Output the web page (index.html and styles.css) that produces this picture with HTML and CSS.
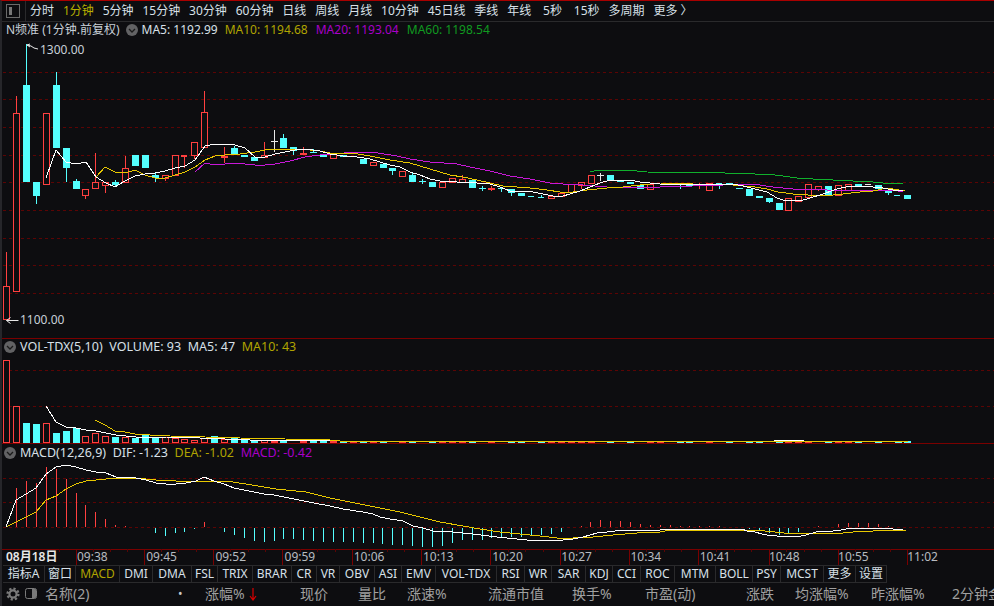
FILE: index.html
```html
<!DOCTYPE html>
<html lang="zh">
<head>
<meta charset="utf-8">
<title>N频准</title>
<link rel="stylesheet" href="styles.css">
</head>
<body>
<div class="app">
  <nav class="toolbar">
    <span class="layout-btn"><i></i></span>
    <span class="sep"></span>
    <div class="periods">
      <span>分时</span><span class="on">1分钟</span><span>5分钟</span><span>15分钟</span><span>30分钟</span><span>60分钟</span><span>日线</span><span>周线</span><span>月线</span><span>10分钟</span><span>45日线</span><span>季线</span><span>年线</span><span class="wide">5秒</span><span class="wide">15秒</span><span>多周期</span><span>更多 〉</span>
    </div>
  </nav>

  <section class="panel main-panel">
    <div class="legend first">
      <span class="title">N频准 (1分钟.前复权)</span>
      <span class="chev"><svg viewBox="0 0 12 12" width="12" height="12"><path d="M3 5l3 3 3-3" class="chev-line"/></svg></span>
      <span class="w">MA5: 1192.99</span><span class="y">MA10: 1194.68</span><span class="m">MA20: 1193.04</span><span class="g">MA60: 1198.54</span>
    </div>
    <svg class="chart" viewBox="0 22 994 316" width="994" height="316">
      <path class="grid" d="M3 72.5H994M3 99.5H994M3 127.5H994M3 155.5H994M3 182.5H994M3 210.5H994M3 238.5H994M3 265.5H994M3 293.5H994"/>
      <path class="wick-r" d="M6.5 252V287M16.5 96V113M85.5 195V199M95.5 153V182M105.5 185V193M125.5 156V168M165.5 178V181M184.5 155V168M194.5 155V159M204.5 91V112M224.5 147V163M264.5 142V155M303.5 147V154M462.5 175V179M491.5 186V191M551.5 196V199M581.5 185V189M699.5 183V189M818.5 189V191"/>
      <path class="wick-c" d="M26.5 44V85M36.5 196V204M56.5 72V85M66.5 168V182M76.5 179V181M115.5 180V187M155.5 173V182M234.5 146V148M283.5 134V138M293.5 151V155M313.5 149V152M392.5 171V175M412.5 173V175M422.5 179V184M482.5 186V191M501.5 188V192M511.5 193V196M541.5 195V198M680.5 185V189M689.5 186V187M719.5 185V189M769.5 202V203M888.5 193V195"/>
      <path class="wick-w" d="M274.5 130V152M600.5 173V181"/>
      <path class="fill-c" d="M23 85h7v97h-7zM33 182h7v14h-7zM53 85h7v63h-7zM63 148h7v20h-7zM73 181h7v8h-7zM112 182h7v3h-7zM132 155h7v11h-7zM142 155h7v13h-7zM152 175h7v3h-7zM231 148h7v7h-7zM241 155h7v2h-7zM251 157h7v4h-7zM280 138h7v10h-7zM290 147h7v4h-7zM310 152h7v1h-7zM320 154h7v3h-7zM340 155h7v2h-7zM360 159h7v5h-7zM380 164h7v4h-7zM389 168h7v3h-7zM409 175h7v7h-7zM419 181h7v1h-7zM429 182h7v5h-7zM469 180h7v8h-7zM479 188h7v1h-7zM498 188h7v1h-7zM508 189h7v4h-7zM518 193h7v3h-7zM528 196h6v1h-6zM538 197h6v1h-6zM607 175h7v6h-7zM617 181h7v1h-7zM627 182h7v2h-7zM637 185h7v4h-7zM677 183h7v2h-7zM686 184h7v2h-7zM716 183h6v2h-6zM726 183h7v2h-7zM736 188h7v1h-7zM746 189h7v7h-7zM756 196h7v2h-7zM766 198h7v4h-7zM776 203h7v7h-7zM825 186h7v9h-7zM855 184h7v3h-7zM875 185h7v4h-7zM885 190h7v3h-7zM894 195h6v1h-6zM904 195h7v4h-7z"/>
      <path class="fill-r" d="M488 188h7v2h-7zM696 185h7v1h-7z"/>
      <path class="fill-w" d="M271 141h7v1h-7zM597 175h7v1h-7zM865 184h6v1h-6z"/>
      <path class="hollow" d="M3.5 286.5h6v33h-6zM13.5 113.5h6v178h-6zM43.5 113.5h6v71h-6zM82.5 189.5h6v6h-6zM92.5 182.5h6v6h-6zM102.5 182.5h6v3h-6zM122.5 168.5h6v14h-6zM162.5 175.5h6v3h-6zM172.5 155.5h6v20h-6zM181.5 155.5h5v1h-5zM191.5 142.5h6v13h-6zM201.5 112.5h6v35h-6zM221.5 156.5h6v1h-6zM261.5 155.5h6v2h-6zM300.5 153.5h6v1h-6zM330.5 154.5h6v4h-6zM370.5 162.5h6v3h-6zM399.5 171.5h6v5h-6zM439.5 182.5h6v5h-6zM449.5 178.5h6v4h-6zM459.5 179.5h6v3h-6zM548.5 196.5h6v2h-6zM558.5 193.5h6v3h-6zM568.5 184.5h6v8h-6zM578.5 182.5h6v3h-6zM588.5 175.5h6v8h-6zM647.5 184.5h6v5h-6zM706.5 183.5h6v7h-6zM785.5 198.5h6v12h-6zM795.5 196.5h6v5h-6zM805.5 184.5h6v13h-6zM815.5 186.5h6v3h-6zM835.5 185.5h6v10h-6zM845.5 184.5h6v6h-6z"/>
      <polyline class="ln green" points="590,172 598,170 607,170 637,171 647,172 725,173 755,174 775,175 790,177 797,178 813,179 833,180 853,181 873,182 883,183 903,184"/>
      <polyline class="ln magenta" points="195,172 205,163 215,165 225,164 235,163 245,164 255,165 265,165 275,164 290,161 305,157 320,155 330,154 358,152 378,153 397,156 410,159 430,162 457,164 470,167 490,171 510,176 530,179 550,183 563,184 583,185 607,187 630,187 660,187 693,186 753,184 773,187 793,189 827,190 893,190 903,192"/>
      <polyline class="ln yellow" points="96,177 105,167 115,172 125,173 135,170 145,175 155,178 165,178 175,175 185,172 195,167 205,160 215,156 225,155 240,154 255,152 265,150 285,149 300,149 320,151 330,153 358,154 370,156 390,160 410,163 430,169 450,175 463,177 477,180 490,183 503,186 517,187 530,188 547,190 560,192 573,192 587,190 607,188 623,187 640,185 660,183 693,184 733,185 755,187 767,189 778,192 793,194 823,196 843,194 860,192 873,191 887,188 905,191"/>
      <polyline class="ln white" points="46,178 56,150 66,162 76,164 86,162 96,177 106,183 115,187 125,181 135,176 145,174 155,173 165,171 175,168 185,166 195,160 205,146 215,144 235,145 245,148 255,157 265,157 275,154 295,150 305,149 320,151 330,154 343,156 357,157 370,159 380,162 390,165 400,167 410,172 420,175 430,179 440,181 457,182 467,182 477,183 490,184 500,187 510,191 520,191 533,192 543,194 553,196 563,196 570,194 580,191 590,187 600,183 610,180 630,180 640,182 650,183 660,184 677,185 693,184 733,184 743,186 755,189 767,192 777,198 783,200 800,201 810,198 823,194 837,189 850,186 873,187 883,188 893,190 903,191"/>
      <path class="flag" d="M27 45l3-1M27 45l3 2M27 45l4 1 3 2 4 1M6.500 320.500l4-3M6.500 320.500l4 3M6.500 320.500h12"/>
      <text class="price" x="40" y="54">1300.00</text>
      <text class="price" x="20" y="324">1100.00</text>
    </svg>
  </section>

  <section class="panel vol-panel">
    <div class="legend lower">
      <span class="chev"><svg viewBox="0 0 12 12" width="12" height="12"><path d="M3 5l3 3 3-3" class="chev-line"/></svg></span>
      <span class="w">VOL-TDX(5,10)</span><span class="w">VOLUME: 93</span><span class="w">MA5: 47</span><span class="y">MA10: 43</span>
    </div>
    <svg class="chart" viewBox="0 338 994 105" width="994" height="105">
      <path class="grid" d="M3 370.500H994M3 406.500H994"/>
      <path class="fill-c" d="M23 423h7v20h-7zM33 424h7v19h-7zM53 433h7v10h-7zM63 431h7v12h-7zM73 428h7v15h-7zM112 437h7v6h-7zM132 438h7v5h-7zM142 434h7v9h-7zM152 437h7v6h-7zM211 436h7v7h-7zM231 438h7v5h-7zM241 439h7v4h-7zM251 440h7v3h-7zM280 440h7v3h-7zM310 441h7v2h-7zM320 441h7v2h-7zM340 441h7v2h-7zM360 441h7v2h-7zM380 441h7v2h-7zM409 441h7v2h-7zM429 441h7v2h-7zM469 441h7v2h-7zM508 441h7v2h-7zM518 441h7v2h-7zM538 441h7v2h-7zM607 441h7v2h-7zM627 441h7v2h-7zM677 441h7v2h-7zM686 441h7v2h-7zM726 441h7v2h-7zM746 441h7v2h-7zM756 441h7v2h-7zM776 441h7v2h-7zM825 441h7v2h-7zM855 441h7v2h-7zM875 441h7v2h-7zM895 441h7v2h-7zM904 441h7v2h-7z"/>
      <path class="fill-r" d="M271 441h7v2h-7zM300 441h7v2h-7zM330 441h7v2h-7zM350 441h7v2h-7zM370 441h7v2h-7zM399 441h7v2h-7zM439 441h7v2h-7zM449 441h7v2h-7zM459 441h7v2h-7zM488 441h7v2h-7zM548 441h7v2h-7zM558 441h7v2h-7zM568 441h7v2h-7zM578 441h7v2h-7zM588 441h7v2h-7zM647 441h7v2h-7zM657 441h7v2h-7zM706 441h7v2h-7zM785 441h7v2h-7zM795 441h7v2h-7zM805 441h7v2h-7zM835 441h7v2h-7zM845 441h7v2h-7z"/>
      <path class="hollow" d="M3.500 360.500h6v82h-6zM13.500 406.500h6v36h-6zM43.500 423.500h6v19h-6zM82.500 436.500h6v6h-6zM92.500 433.500h6v9h-6zM102.500 436.500h6v6h-6zM122.500 437.500h6v5h-6zM162.500 437.500h6v5h-6zM172.500 438.500h6v4h-6zM181.500 439.500h6v3h-6zM191.500 440.500h6v2h-6zM201.500 438.500h6v4h-6zM221.500 439.500h6v3h-6zM261.500 440.500h6v2h-6z"/>
      <polyline class="ln white" points="46,406 56,422 66,427 76,428 86,430 96,431 106,433 116,435 126,436 136,437 166,437 200,438 250,440 330,440"/>
      <polyline class="ln yellow" points="95,420 105,425 115,431 125,432 135,434 150,435 170,436 240,438 330,440 340,441 908,441"/>
      <polyline class="ln white" points="774,440 804,440"/>
    </svg>
  </section>

  <section class="panel macd-panel">
    <div class="legend lower">
      <span class="chev"><svg viewBox="0 0 12 12" width="12" height="12"><path d="M3 5l3 3 3-3" class="chev-line"/></svg></span>
      <span class="w">MACD(12,26,9)</span><span class="w">DIF: -1.23</span><span class="y">DEA: -1.02</span><span class="m">MACD: -0.42</span>
    </div>
    <svg class="chart" viewBox="0 443 994 106" width="994" height="106">
      <path class="grid" d="M3 478.500H994M3 502.500H994M3 527.500H994"/>
      <path class="wick-r" d="M16.5 488V527M26.5 481V527M36.5 483V527M46.5 467V527M56.5 469V527M66.5 479V527M76.5 493V527M85.5 505V527M95.5 512V527M105.5 519V527M115.5 525V527M125.5 526V527M204.5 522V527M581.5 526V527M590.5 522V527M600.5 520V527M610.5 521V527M620.5 521V527M630.5 522V527M640.5 524V527M650.5 525V527M660.5 525V527M670.5 525V527M680.5 526V527M689.5 526V527M699.5 526V527M709.5 526V527M719.5 526V527M818.5 526V527M838.5 524V527M848.5 523V527M858.5 523V527M868.5 523V527M878.5 524V527M888.5 526V527"/>
      <path class="wick-c" d="M155.5 528V533M165.5 528V536M175.5 528V533M184.5 528V532M194.5 528V529M224.5 528V532M234.5 528V535M244.5 528V538M254.5 528V541M264.5 528V542M274.5 528V541M283.5 528V539M293.5 528V539M303.5 528V540M313.5 528V541M323.5 528V542M333.5 528V542M343.5 528V542M353.5 528V542M363.5 528V543M373.5 528V543M382.5 528V544M392.5 528V545M402.5 528V545M412.5 528V546M422.5 528V547M432.5 528V547M442.5 528V546M452.5 528V543M462.5 528V540M472.5 528V540M482.5 528V540M491.5 528V538M501.5 528V537M511.5 528V537M521.5 528V537M531.5 528V536M541.5 528V535M551.5 528V534M561.5 528V532M749.5 528V529M759.5 528V530M769.5 528V533M779.5 528V535M788.5 528V534M798.5 528V532"/>
      <polyline class="ln yellow" points="6,527 16,522 26,517 36,512 46,500 56,496 66,489 76,484 86,481 96,480 106,479 116,478 136,478 156,480 176,481 226,481 246,484 276,489 306,492 330,498 340,500 360,504 380,508 400,512 420,517 440,522 463,526 480,529 500,532 520,534 540,536 557,538 573,538 593,537 613,535 637,533 660,532 665,531 693,530 747,530 765,531 775,532 784,533 843,533 853,532 873,531 907,530"/>
      <polyline class="ln white" points="6,527 16,500 26,494 36,488 46,474 56,467 66,465 76,467 86,470 96,472 106,473 116,477 136,478 146,480 156,483 166,484 176,484 186,483 196,481 204,477 214,481 224,484 234,488 244,490 254,492 264,494 274,495 284,497 294,499 304,501 314,503 330,506 343,509 363,512 373,514 380,517 390,519 403,521 413,526 423,528 433,531 453,532 463,533 473,534 497,537 517,539 527,540 563,540 573,539 583,537 597,533 607,532 623,530 637,531 660,530 665,529 676,530 694,529 742,529 747,531 755,532 762,534 767,535 777,536 801,536 806,535 816,532 833,531 841,530 846,529 863,528 893,529 903,530"/>
    </svg>
  </section>

  <div class="axis">
    <span class="date">08月18日</span>
    <svg class="axis-lines" viewBox="0 549 994 16" width="994" height="16">
      <path class="tick-major" d="M76.5 549V565M144.5 549V565M213.5 549V565M282.5 549V565M352.5 549V565M421.5 549V565M490.5 549V565M560.5 549V565M629.5 549V565M698.5 549V565M769.5 549V565M838.5 549V565M907.5 549V565"/>
      <path class="tick-minor" d="M59.5 549V552M93.5 549V552M110.5 549V552M127.5 549V552M161.5 549V552M178.5 549V552M196.5 549V552M230.5 549V552M248.5 549V552M265.5 549V552M300.5 549V552M317.5 549V552M335.5 549V552M369.5 549V552M387.5 549V552M404.5 549V552M438.5 549V552M456.5 549V552M473.5 549V552M508.5 549V552M525.5 549V552M543.5 549V552M577.5 549V552M595.5 549V552M612.5 549V552M646.5 549V552M664.5 549V552M681.5 549V552M716.5 549V552M734.5 549V552M751.5 549V552M786.5 549V552M804.5 549V552M821.5 549V552M855.5 549V552M873.5 549V552M890.5 549V552"/>
    </svg>
    <div class="times">
      <span>09:38</span><span>09:45</span><span>09:52</span><span>09:59</span><span>10:06</span><span>10:13</span><span>10:20</span><span>10:27</span><span>10:34</span><span>10:41</span><span>10:48</span><span>10:55</span><span>11:02</span>
    </div>
  </div>

  <div class="tabs">
    <span>指标A</span><span>窗口</span><span class="y">MACD</span><span>DMI</span><span>DMA</span><span>FSL</span><span>TRIX</span><span>BRAR</span><span>CR</span><span>VR</span><span>OBV</span><span>ASI</span><span>EMV</span><span>VOL-TDX</span><span>RSI</span><span>WR</span><span>SAR</span><span>KDJ</span><span>CCI</span><span>ROC</span><span>MTM</span><span>BOLL</span><span>PSY</span><span>MCST</span><span>更多</span><span>设置</span>
  </div>

  <div class="table-head">
    <svg class="gear" viewBox="0 0 14 14" width="14" height="14"><circle cx="7" cy="7" r="5.4" class="gear-teeth"/><circle cx="7" cy="7" r="3.6" class="gear-ring"/></svg>
    <svg class="toggle" viewBox="0 0 12 11" width="12" height="11"><rect x=".5" y=".5" width="11" height="10" rx="2" class="toggle-box"/><path d="M7 1h3a1 1 0 0 1 1 1v7a1 1 0 0 1-1 1H7z" class="toggle-fill"/></svg>
    <span>名称(2)</span>
    <span class="dot">•</span>
    <span>涨幅%<svg class="arrow" viewBox="0 0 8 14" width="8" height="14"><path d="M4 1v12M1 9l3 4 3-4" class="arrow-line"/></svg></span>
    <span>现价</span><span>量比</span><span>涨速%</span><span>流通市值</span><span>换手%</span><span>市盈(动)</span><span>涨跌</span><span>均涨幅%</span><span>昨涨幅%</span><span>2分钟金额</span>
  </div>
</div>
</body>
</html>
```
FILE: styles.css
```css
* { box-sizing: border-box; }
html, body { margin: 0; padding: 0; background: #0d0d10; }
body { width: 994px; height: 606px; overflow: hidden; font-family: "Noto Sans", "Noto Sans CJK SC", sans-serif; color: #d8e0e8; }
.app { width: 994px; height: 606px; display: flex; flex-direction: column; border-top: 1px solid #a80000; border-left: 2px solid #26262a; position: relative; overflow: hidden; }

.toolbar { height: 21px; flex: none; display: flex; align-items: center; border-bottom: 1px solid #2a2a2c; padding-left: 4px; font-size: 12px; }
.layout-btn { width: 14px; height: 14px; border: 1px solid #6a6a6a; padding: 2px 7px 2px 2px; margin-right: 5px; }
.layout-btn i { display: block; width: 3px; height: 8px; background: #777; }
.sep { width: 1px; height: 20px; background: #2a2a2c; margin-right: 4px; }
.periods { display: flex; gap: 8.9px; white-space: nowrap; line-height: 20px; }
.periods .on { color: #b8b000; }
.periods .wide { margin-left: 3px; }

.panel { position: relative; flex: none; }
.main-panel { height: 316px; margin-left: -2px; }
.vol-panel { height: 105px; margin-left: -2px; border-top: 1px solid #7a0000; }
.macd-panel { height: 107px; margin-left: -2px; border-top: 1px solid #7a0000; border-bottom: 1px solid #7a0000; }
.chart { display: block; position: absolute; left: 0; top: 0; }
.vol-panel .chart, .macd-panel .chart { top: -1px; }

.legend { position: absolute; left: 4px; top: 1px; z-index: 1; display: flex; align-items: center; gap: 6px; font-size: 12px; line-height: 16px; white-space: nowrap; }
.legend.first { left: 6px; top: 0; }
.legend.first .w { margin-right: 1px; }
.legend.first .y, .legend.first .m { margin-right: 2px; }
.legend.lower { font-size: 12.5px; gap: 6.6px; top: 0; }
.macd-panel .legend.lower { top: 1px; }
.title { color: #c8d0d8; }
.chev { width: 12px; height: 12px; border-radius: 50%; background: #626264; display: block; margin-right: -2px; }
.legend.lower .chev { margin-right: -2.600px; }
.chev svg { display: block; }
.chev-line { fill: none; stroke: #1a1a1a; stroke-width: 1.3; }
.w { color: #d8e0e8; }
.y { color: #b0a400; }
.m { color: #a800c8; }
.g { color: #109a20; }

.grid { fill: none; stroke: #5c0404; stroke-width: 1; stroke-dasharray: 3 3; shape-rendering: crispEdges; }
.hollow { fill: #0d0d10; stroke: #ff4040; stroke-width: 1; shape-rendering: crispEdges; }
.fill-c { fill: #54ffff; shape-rendering: crispEdges; }
.fill-r { fill: #ff3c3c; shape-rendering: crispEdges; }
.fill-w { fill: #e8e8e8; shape-rendering: crispEdges; }
.wick-r { stroke: #ff4040; stroke-width: 1; fill: none; shape-rendering: crispEdges; }
.wick-c { stroke: #54ffff; stroke-width: 1; fill: none; shape-rendering: crispEdges; }
.wick-w { stroke: #e8e8e8; stroke-width: 1; fill: none; shape-rendering: crispEdges; }
.ln { fill: none; stroke-width: 1; shape-rendering: crispEdges; }
.white { stroke: #ffffff; }
.yellow { stroke: #e8c800; }
.magenta { stroke: #c818d8; }
.green { stroke: #10b02c; }
.flag { fill: none; stroke: #e8e8e8; stroke-width: 1; }
.price { fill: #c8d0d8; font-size: 12px; font-family: "Noto Sans", sans-serif; }

.axis { height: 15px; flex: none; position: relative; margin-left: -2px; font-size: 12px; }
.axis-lines { display: block; position: absolute; left: 0; top: -1px; }
.tick-major { stroke: #7a0000; fill: none; shape-rendering: crispEdges; }
.tick-minor { stroke: #5c0404; fill: none; shape-rendering: crispEdges; }
.date { position: absolute; left: 6px; top: -1px; line-height: 16px; font-weight: 600; color: #e8e8e8; }
.times { display: grid; grid-template-columns: repeat(13, 69.2px); padding-left: 77px; margin-top: -1px; line-height: 16px; color: #b8bcc0; }

.tabs { height: 18px; flex: none; margin-left: 0; margin-top: 0; display: grid; grid-template-columns: 42px 31px 44px 33px 39px 26px 35px 39px 25px 23px 35px 27px 34px 61px 28px 27px 34px 27px 28px 34px 41px 37px 28px 43px 32px 31px; width: max-content; border-top: 1px solid #2a2a2c; border-bottom: 1px solid #2a2a2c; font-size: 12px; line-height: 16px; text-align: center; white-space: nowrap; margin-left: 1px; }
.tabs span { border-right: 1px solid #2a2a2c; }

.table-head { flex: 1; margin-left: 4px; display: grid; grid-template-columns: 19px 20px 133px 27px 95px 58px 49px 81px 84px 73px 101px 49px 76px 81px 100px; align-items: center; font-size: 14px; line-height: 20px; color: #a0a0a0; white-space: nowrap; padding-bottom: 2px; }
.gear-teeth { fill: none; stroke: #7a7a7a; stroke-width: 2.4; stroke-dasharray: 2.2 2; }
.gear-ring { fill: none; stroke: #7a7a7a; stroke-width: 2.2; }
.toggle-box { fill: none; stroke: #7a7a7a; }
.toggle-fill { fill: #7a7a7a; }
.dot { color: #c8c8c8; font-size: 12px; }
.arrow { display: inline-block; vertical-align: -2px; margin-left: 4px; }
.arrow-line { fill: none; stroke: #d80000; stroke-width: 1.2; }
```
